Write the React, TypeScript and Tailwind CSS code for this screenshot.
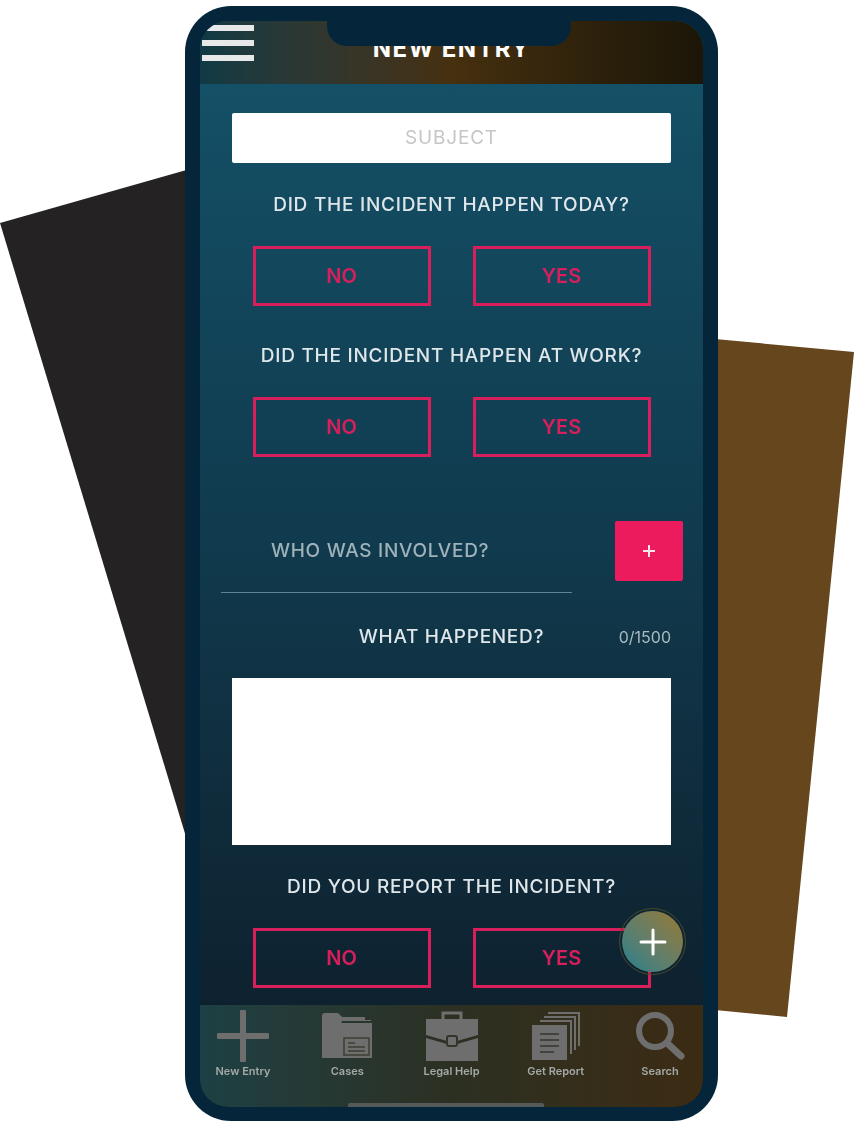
const font = { fontFamily: '"Inter", "Liberation Sans", sans-serif' };

function ChoiceRow() {
  return (
    <div className="flex justify-center gap-[42px]">
      <button className="w-[178px] h-[60px] border-[3px] border-[#d81f5c] text-[20px] font-semibold text-[#d81f5c]">NO</button>
      <button className="w-[178px] h-[60px] border-[3px] border-[#d81f5c] text-[20px] font-semibold text-[#d81f5c]">YES</button>
    </div>
  );
}

function Question({ text, className }: { text: string; className: string }) {
  return <p className={`text-center text-[19px] leading-[24px] font-medium tracking-[0.75px] text-[#dfe7ea] ${className}`}>{text}</p>;
}

function NavItem({ label, children }: { label: string; children: React.ReactNode }) {
  return (
    <div className="flex flex-col items-center w-[64px]">
      <div className="h-[52px] w-[56px] flex items-center justify-center">{children}</div>
      <span className="mt-[2px] text-[11px] leading-[14px] font-semibold text-[#a3a9a6] whitespace-nowrap">{label}</span>
    </div>
  );
}

export default function App() {
  return (
    <div className="relative w-[855px] h-[1127px] overflow-hidden bg-white" style={font}>
      <svg className="absolute inset-0" width="855" height="1127" viewBox="0 0 855 1127">
        <polygon points="0,223 190,169 190,850" fill="#252223" />
        <polygon points="715,339 854,352 787,1017 715,1010" fill="#66461c" />
      </svg>

      <div className="relative ml-[185px] mt-[6px] w-[533px] h-[1115px] rounded-[46px] bg-[#05263a] p-[15px]">
        <div className="relative h-[1086px] rounded-[28px] overflow-hidden bg-gradient-to-b from-[#14536a] via-[#10394c] to-[#0d1c28] blur-[0.5px]">
          {/* header */}
          <div className="relative h-[63px] flex items-end justify-center pb-[20px] bg-gradient-to-r from-[#0f3a45] via-[#46300f] to-[#1c1608]">
            <div className="absolute left-[2px] top-[4px] flex flex-col gap-[9px]">
              <div className="w-[52px] h-[6px] bg-[#e6e8ea]" />
              <div className="w-[52px] h-[6px] bg-[#e6e8ea]" />
              <div className="w-[52px] h-[6px] bg-[#e6e8ea]" />
            </div>
            <h1 className="text-[24px] leading-[30px] font-bold tracking-[1.4px] text-white">NEW ENTRY</h1>
          </div>

          <div className="mt-[29px] mx-[32px] h-[50px] w-[439px] rounded-[2px] bg-white flex items-center justify-center text-[19px] tracking-[0.8px] text-[#c4c6c8]">SUBJECT</div>

          <Question text="DID THE INCIDENT HAPPEN TODAY?" className="mt-[30px]" />
          <div className="mt-[29px]"><ChoiceRow /></div>

          <Question text="DID THE INCIDENT HAPPEN AT WORK?" className="mt-[38px]" />
          <div className="mt-[29px]"><ChoiceRow /></div>

          {/* involved */}
          <div className="mt-[64px] flex items-start">
            <div className="ml-[21px] w-[351px] h-[72px] border-b-[1.5px] border-[#5d8596] pl-[50px] pt-[18px] text-[19px] leading-[24px] font-medium tracking-[0.7px] text-[#9fb2ba]">WHO WAS INVOLVED?</div>
            <div className="ml-[43px] w-[68px] h-[60px] rounded-[2px] bg-[#ec1b5e] flex items-center justify-center">
              <svg width="16" height="16" viewBox="0 0 16 16"><path d="M8 2v12M2 8h12" stroke="#f6e6ec" strokeWidth="2" /></svg>
            </div>
          </div>

          <div className="mt-[32px] relative h-[24px]">
            <p className="text-center text-[19px] leading-[24px] font-medium tracking-[0.7px] text-[#dfe7ea]">WHAT HAPPENED?</p>
            <span className="absolute right-[32px] top-0 text-[16px] leading-[24px] text-[#a9bac1]">0/1500</span>
          </div>

          <div className="mt-[29px] mx-[32px] h-[167px] bg-white" />

          <Question text="DID YOU REPORT THE INCIDENT?" className="mt-[30px]" />
          <div className="mt-[29px]"><ChoiceRow /></div>

          {/* bottom nav */}
          <div className="absolute left-0 right-0 bottom-0 h-[102px] px-[11px] pt-[5px] flex justify-between bg-gradient-to-r from-[#1d4044] via-[#2c3022] to-[#3c2b13]">
            <NavItem label="New Entry">
              <svg width="52" height="52" viewBox="0 0 52 52"><path d="M26 2v48M2 26h48" stroke="#6e6e6e" strokeWidth="6" strokeLinecap="round" /></svg>
            </NavItem>
            <NavItem label="Cases">
              <svg width="52" height="48" viewBox="0 0 52 48">
                <path d="M1 46V4a3 3 0 0 1 3-3h13l4 4h23v3H22l-2 3h31v35z" fill="#6e6e6e" />
                <path d="M22 8h28v1H22z" fill="#6e6e6e" />
                <rect x="23" y="26" width="25" height="17" fill="#6e6e6e" stroke="#3d3f34" strokeWidth="1.5" />
                <path d="M27 31h7M27 35h17M27 39h17" stroke="#3d3f34" strokeWidth="1.5" />
              </svg>
            </NavItem>
            <NavItem label="Legal Help">
              <svg width="52" height="50" viewBox="0 0 52 50">
                <path d="M17 8V2h18v6" fill="none" stroke="#6e6e6e" strokeWidth="3" />
                <path d="M0 8h52v16L31 30h-10L0 24z" fill="#6e6e6e" />
                <path d="M0 27l21 6v2h10v-2l21-6v23H0z" fill="#6e6e6e" />
                <rect x="21" y="25" width="10" height="10" rx="2" fill="#6e6e6e" stroke="#33342a" strokeWidth="2" />
              </svg>
            </NavItem>
            <NavItem label="Get Report">
              <svg width="48" height="48" viewBox="0 0 48 48">
                <path d="M16 1h31v33" fill="none" stroke="#6e6e6e" strokeWidth="2" />
                <path d="M12 5h31v33" fill="none" stroke="#6e6e6e" strokeWidth="2" />
                <path d="M8 9h31v33" fill="none" stroke="#6e6e6e" strokeWidth="2" />
                <rect x="0" y="13" width="35" height="35" fill="#6e6e6e" />
                <path d="M8 22h19M8 28h19M8 34h19M8 40h14" stroke="#35362c" strokeWidth="1.5" />
              </svg>
            </NavItem>
            <NavItem label="Search">
              <svg width="50" height="48" viewBox="0 0 50 48">
                <circle cx="20" cy="19" r="16" fill="none" stroke="#6e6e6e" strokeWidth="6" />
                <path d="M32 31l14 13" stroke="#6e6e6e" strokeWidth="7" strokeLinecap="round" />
              </svg>
            </NavItem>
          </div>
          <div className="absolute bottom-0 left-[148px] w-[196px] h-[4px] rounded-t-[2px] bg-[#55595a]" />

          {/* floating button */}
          <div className="absolute left-[419px] top-[887px] w-[67px] h-[67px] rounded-full border border-[#4a4a28] p-[2px]">
            <div className="w-full h-full rounded-full bg-gradient-to-tr from-[#0f7f8e] to-[#96782a] flex items-center justify-center">
              <svg width="28" height="28" viewBox="0 0 28 28"><path d="M14 2v24M2 14h24" stroke="#fff" strokeWidth="3" strokeLinecap="round" /></svg>
            </div>
          </div>
        </div>

        {/* notch */}
        <div className="absolute left-[142px] top-0 w-[244px] h-[40px] rounded-b-[20px] bg-[#05263a]" />
      </div>
    </div>
  );
}
